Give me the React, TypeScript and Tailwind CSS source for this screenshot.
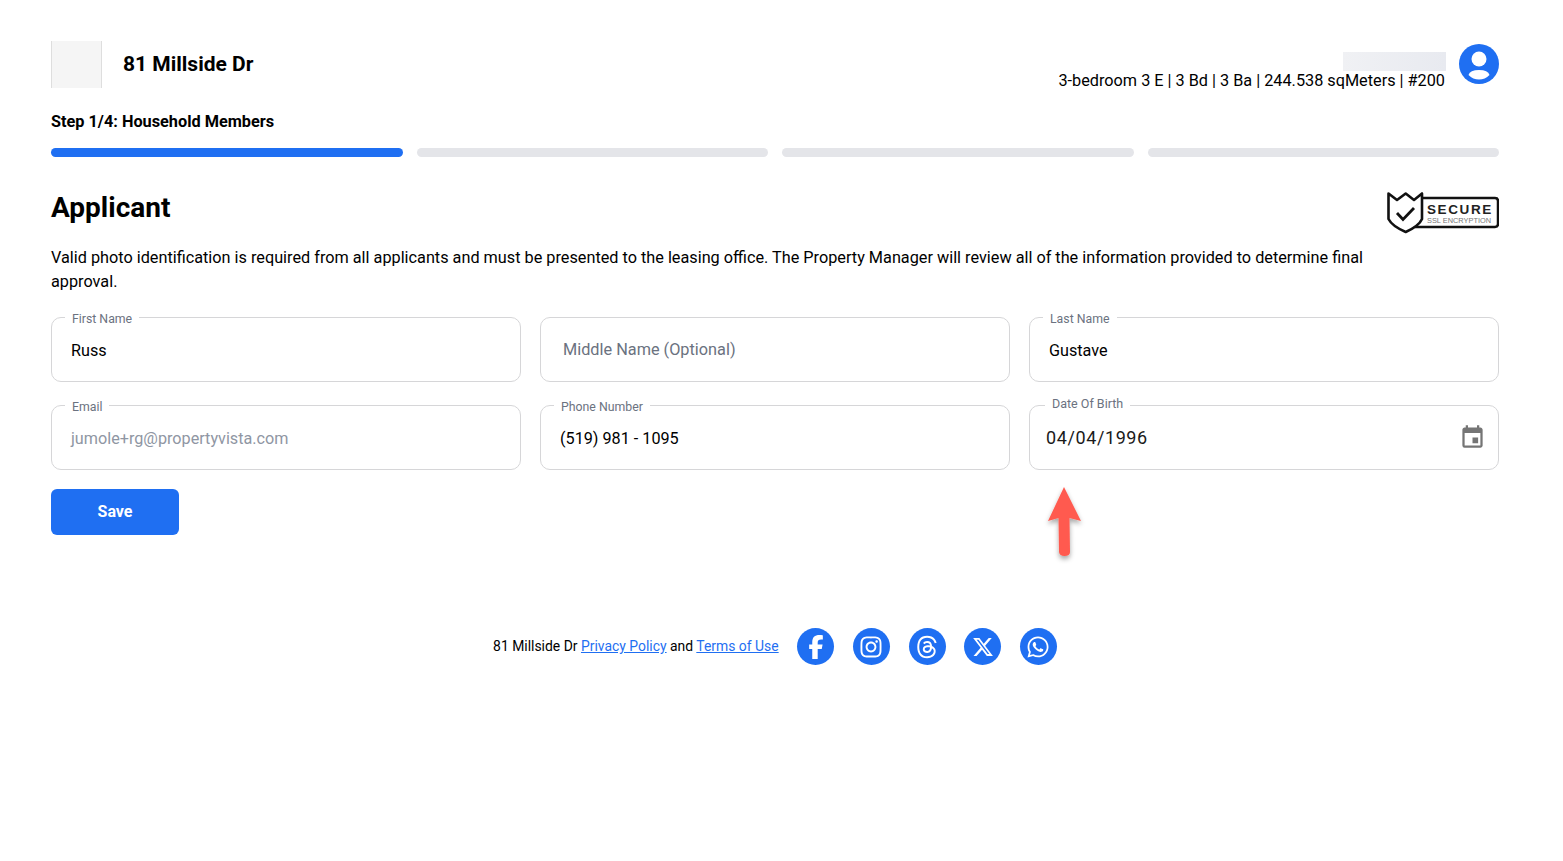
import React from 'react';
import { FaFacebookF, FaInstagram, FaThreads, FaXTwitter, FaWhatsapp } from 'react-icons/fa6';
import { MdEvent } from 'react-icons/md';

const Field = ({
  label,
  value,
  placeholder,
  muted,
}: {
  label?: string;
  value?: string;
  placeholder?: string;
  muted?: boolean;
}) => (
  <div className="relative h-[65px] rounded-[10px] border border-[#d6d6d8] flex items-center px-[19px]">
    {label && (
      <span className="absolute left-[13px] top-[-5px] bg-white px-[7px] text-[12.3px] leading-[13px] text-[#6b7280]">
        {label}
      </span>
    )}
    {placeholder ? (
      <span className="pl-[3px] pt-[1px] text-[16.3px] text-[#6b7280]">{placeholder}</span>
    ) : (
      <span className={`pt-[3px] text-[16.2px] ${muted ? 'text-[#8f96a3]' : 'text-black'}`}>{value}</span>
    )}
  </div>
);

const DateField = () => (
  <div className="relative h-[65px] rounded-[10px] border border-[#d6d6d8] flex items-center justify-between pl-[16px] pr-[12px]">
    <span className="absolute left-[15px] top-[-10px] bg-white px-[7px] text-[12.5px] leading-[16px] text-[#6b7280]">
      Date Of Birth
    </span>
    <span className="text-[18px] tracking-[0.6px] text-[#1a1a1a]">04/04/1996</span>
    <MdEvent className="text-[#757575]" size={27} />
  </div>
);

const SecureBadge = () => (
  <svg width="112" height="42" viewBox="0 0 112 42" className="shrink-0">
    <path d="M34 6 H108 Q111 6 111 9 V32 Q111 35 108 35 H28" fill="none" stroke="#111" strokeWidth="2.5" />
    <path
      d="M1.5 1.5 L10 8 L18.7 1.5 L27 8 L35 1.5 V27 Q32 34 18.7 40 Q5 34 1.5 27 Z"
      fill="#fff"
      stroke="#111"
      strokeWidth="2.6"
      strokeLinejoin="round"
    />
    <path d="M10 21 L16 27.5 L27 16" fill="none" stroke="#111" strokeWidth="2.8" />
    <text x="40" y="21.5" fontFamily="Liberation Sans, sans-serif" fontSize="13.5" fontWeight="700" letterSpacing="1.6" fill="#222">
      SECURE
    </text>
    <text x="40" y="30.5" fontFamily="Liberation Sans, sans-serif" fontSize="7.4" fill="#777">
      SSL ENCRYPTION
    </text>
  </svg>
);

const Avatar = () => (
  <svg width="40" height="40" viewBox="0 0 40 40" className="shrink-0 -mt-[2px]">
    <circle cx="20" cy="20" r="20" fill="#1f6ff2" />
    <circle cx="20" cy="15" r="7.5" fill="#fff" />
    <path d="M9.5 31 Q11 26 20 26 Q29 26 30.5 31 Q26 35.5 20 35.5 Q14 35.5 9.5 31 Z" fill="#fff" />
  </svg>
);

const socials = [
  { Icon: FaFacebookF, size: 24 },
  { Icon: FaInstagram, size: 24 },
  { Icon: FaThreads, size: 24 },
  { Icon: FaXTwitter, size: 22 },
  { Icon: FaWhatsapp, size: 24 },
];

export default function App() {
  return (
    <div className="min-h-screen bg-white pl-[51px] pr-[64px] pt-[41px] font-['Roboto',sans-serif] text-black">
      <header className="flex items-center justify-between h-[47px]">
        <div className="flex items-center gap-[21px]">
          <div className="w-[51px] h-[47px] bg-[#f5f5f5] border-x border-[#dedede]" />
          <h2 className="text-[21px] font-bold leading-none">81 Millside Dr</h2>
        </div>
        <div className="flex items-center gap-[14px]">
          <div className="mt-[14px] flex flex-col items-end">
            <div className="w-[103px] h-[19px] bg-gradient-to-r from-[#f0f1f4] to-[#e8eaf0] mr-[-1px]" />
            <p className="text-[16.25px] leading-[20px]">3-bedroom 3 E | 3 Bd | 3 Ba | 244.538 sqMeters | #200</p>
          </div>
          <Avatar />
        </div>
      </header>

      <p className="mt-[24px] text-[16.3px] font-bold leading-[20px]">Step 1/4: Household Members</p>

      <div className="mt-[16px] grid grid-cols-4 gap-[14px]">
        <div className="h-[9px] rounded-full bg-[#1f6ff2]" />
        <div className="h-[9px] rounded-full bg-[#e4e5e9]" />
        <div className="h-[9px] rounded-full bg-[#e4e5e9]" />
        <div className="h-[9px] rounded-full bg-[#e4e5e9]" />
      </div>

      <div className="mt-[35px] flex items-start justify-between">
        <h1 className="mt-[-1px] text-[28px] font-bold leading-[34px]">Applicant</h1>
        <SecureBadge />
      </div>

      <p className="mt-[12px] max-w-[1320px] text-[16.25px] leading-[24px]">
        Valid photo identification is required from all applicants and must be presented to the leasing office. The
        Property Manager will review all of the information provided to determine final approval.
      </p>

      <div className="mt-[23px] grid grid-cols-3 gap-x-[19px] gap-y-[23px]">
        <Field label="First Name" value="Russ" />
        <Field placeholder="Middle Name (Optional)" />
        <Field label="Last Name" value="Gustave" />
        <Field label="Email" value="jumole+rg@propertyvista.com" muted />
        <Field label="Phone Number" value="(519) 981 - 1095" />
        <DateField />
      </div>

      <div className="relative">
        <button type="button" className="mt-[19px] w-[128px] h-[46px] rounded-[6px] bg-[#1f6ff2] text-white text-[16px] font-bold">
          Save
        </button>
        <svg width="50" height="84" viewBox="0 0 50 84" className="absolute left-[988px] top-[14px]">
          <defs>
            <filter id="arrow-shadow" x="-30%" y="-20%" width="160%" height="140%">
              <feDropShadow dx="0" dy="3" stdDeviation="2.5" floodColor="#000" floodOpacity="0.35" />
            </filter>
          </defs>
          <path
            d="M25 3 L42 37 L30.5 34 L31 68 Q31 72 25.5 72 Q20.5 72 20 68 L19.5 34 L9 37 Z"
            fill="#ff5a4f"
            filter="url(#arrow-shadow)"
          />
        </svg>
      </div>

      <footer className="mt-[93px] flex items-center justify-center gap-[18.5px]">
        <p className="text-[13.92px] leading-[20px] -mt-[1px]">
          81 Millside Dr <a className="text-[#1f6ff2] underline" href="#privacy">Privacy Policy</a> and{' '}
          <a className="text-[#1f6ff2] underline" href="#terms">Terms of Use</a>
        </p>
        <div className="flex items-center gap-[18.7px]">
          {socials.map(({ Icon, size }, i) => (
            <a key={i} href="#social" className="w-[37px] h-[37px] rounded-full bg-[#1f6ff2] flex items-center justify-center text-white">
              <Icon size={size} />
            </a>
          ))}
        </div>
      </footer>
    </div>
  );
}
